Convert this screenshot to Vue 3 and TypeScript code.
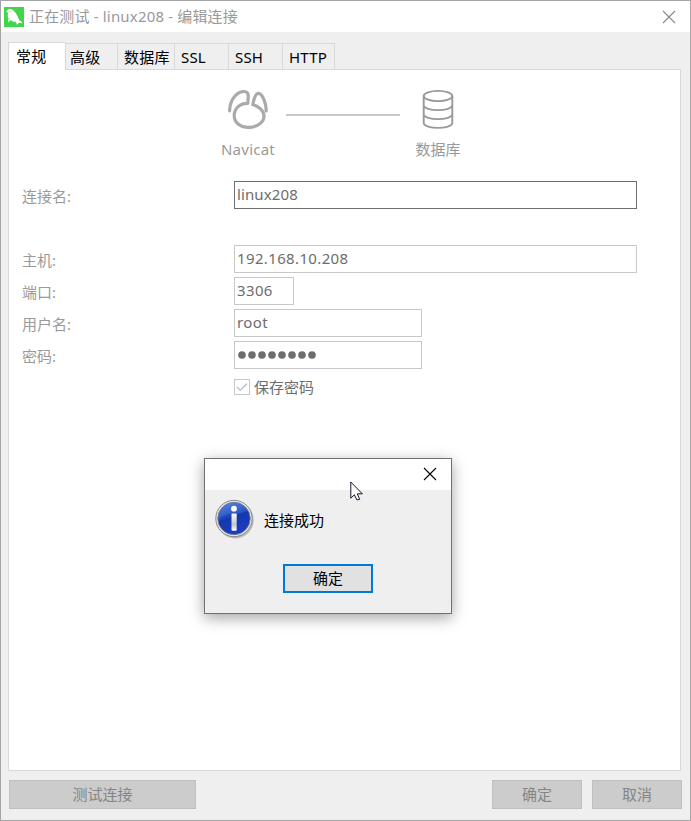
<script setup lang="ts">
interface Tab {
  label: string
  width: number
}

interface Field {
  id: string
  label: string
  value: string
  size: 'full' | 'small' | 'medium'
  type?: string
}

const tabs: Tab[] = [
  { label: '常规', width: 58 },
  { label: '高级', width: 52 },
  { label: '数据库', width: 57 },
  { label: 'SSL', width: 54 },
  { label: 'SSH', width: 54 },
  { label: 'HTTP', width: 52 },
]

const fields: Field[] = [
  { id: 'name', label: '连接名:', value: 'linux208', size: 'full' },
  { id: 'host', label: '主机:', value: '192.168.10.208', size: 'full' },
  { id: 'port', label: '端口:', value: '3306', size: 'small' },
  { id: 'user', label: '用户名:', value: 'root', size: 'medium' },
  { id: 'password', label: '密码:', value: '', size: 'medium', type: 'password' },
]
</script>

<template>
  <div class="window">
    <header class="titlebar">
      <svg class="logo" width="20" height="20" viewBox="0 0 20 20">
        <rect width="20" height="20" fill="#40d54a" />
        <path d="M3 3.2 C4.5 2.2 6 1.7 7.2 2.2 C9.5 3 11.6 5.2 13.2 8.5 C14.2 10.5 14.8 12 15.3 13.2 C16.8 13.8 18 15 18.5 16.3 L14.8 15.7 L12.8 18 L12.2 15.2 C10 15.2 8.2 14.4 6.7 13 L4 15.4 L4.5 11.4 C3.2 9.4 3.8 7.5 4.1 6 L2.3 4.8 Z" fill="#fff" />
        <path d="M5 5.4 L7 4.4 M5 12 L6.5 10.6 M10.5 15 L12 14.2" stroke="#8fe795" stroke-width=".8" />
      </svg>
      <span class="title">正在测试 - linux208 - 编辑连接</span>
      <svg class="close" width="14" height="14" viewBox="0 0 14 14">
        <path d="M1 1 L13 13 M13 1 L1 13" stroke="#888" stroke-width="1.1" />
      </svg>
    </header>

    <nav class="tabs">
      <div
        v-for="(tab, i) in tabs"
        :key="tab.label"
        class="tab"
        :class="{ active: i === 0, tight: i === 1 }"
        :style="{ width: tab.width + 'px' }"
      >{{ tab.label }}</div>
    </nav>

    <main class="panel">
      <div class="diagram">
        <div class="node latin">
          <svg width="42" height="42" viewBox="0 0 42 42" fill="none" stroke="#aaa" stroke-width="3.2" stroke-linecap="round" stroke-linejoin="round">
            <path d="M2.6 22.8 C2.8 14 8 4.5 15.8 3.6 C20.5 3 21.6 6 21.2 9.5 L20.8 15.3 C12.5 15 7.2 21 7.2 27.5 C7.2 34.5 12.8 39.4 21.5 39.4 C30.5 39.4 37 34 37 28.3 C37 23 31.5 18 25.8 16.6 C26.6 12.5 28.2 6.2 30.7 5.4 C34.8 4.6 39.4 14.5 39.2 23" />
          </svg>
          <span>Navicat</span>
        </div>
        <div class="wire"></div>
        <div class="node">
          <svg width="42" height="42" viewBox="0 0 42 42" fill="none" stroke="#999" stroke-width="1.9">
            <ellipse cx="21" cy="8" rx="14.3" ry="5.1" />
            <path d="M6.7 8 V34.8 C6.7 41.6 35.3 41.6 35.3 34.8 V8 M6.7 17 C6.7 23.8 35.3 23.8 35.3 17 M6.7 26 C6.7 32.8 35.3 32.8 35.3 26" />
          </svg>
          <span>数据库</span>
        </div>
      </div>

      <form class="form" @submit.prevent>
        <div v-for="field in fields" :key="field.id" class="row" :class="'row-' + field.id">
          <label class="label">{{ field.label }}</label>
          <div class="input" :class="field.size">
            <svg v-if="field.type === 'password'" class="dots" width="80" height="10" viewBox="0 0 80 10">
              <circle v-for="n in 8" :key="n" :cx="n * 10 - 5" cy="5" r="3.8" fill="#6d6d6d" />
            </svg>
            <template v-else>{{ field.value }}</template>
          </div>
        </div>
        <div class="save">
          <span class="checkbox">
            <svg width="14" height="14" viewBox="0 0 14 14">
              <path d="M2 7 L5.3 10.2 L12 3.6" fill="none" stroke="#c4c4c4" stroke-width="1.5" />
            </svg>
          </span>
          <span>保存密码</span>
        </div>
      </form>
    </main>

    <footer class="footer">
      <button class="btn test">测试连接</button>
      <button class="btn">确定</button>
      <button class="btn">取消</button>
    </footer>

    <section class="dialog">
      <div class="dialog-bar">
        <svg width="14" height="14" viewBox="0 0 14 14">
          <path d="M1 1 L13 13 M13 1 L1 13" stroke="#000" stroke-width="1.1" />
        </svg>
      </div>
      <div class="message">
        <svg width="40" height="41" viewBox="0 0 40 41">
          <defs>
            <linearGradient id="blue" x1="0" y1="0" x2=".35" y2="1">
              <stop offset="0" stop-color="#5e8ae2" />
              <stop offset=".48" stop-color="#2b58c8" />
              <stop offset=".55" stop-color="#1639a8" />
              <stop offset="1" stop-color="#2340d0" />
            </linearGradient>
            <linearGradient id="silver" x1="0" y1="0" x2="0" y2="1">
              <stop offset="0" stop-color="#fff" />
              <stop offset=".65" stop-color="#c2c5cd" />
              <stop offset="1" stop-color="#fff" />
            </linearGradient>
          </defs>
          <circle cx="20.3" cy="21" r="18.4" fill="#777" opacity=".45" />
          <circle cx="19" cy="19.5" r="18.2" fill="#e7e7e7" stroke="#888" stroke-width="1" />
          <circle cx="19" cy="19.5" r="16.2" fill="url(#blue)" stroke="#727b91" stroke-width="1" />
          <path d="M3.5 21 C9 13 23 13.5 34.5 17 C35 28 29 34.5 19 35 C10 35 4 29 3.5 21" fill="#1437b0" opacity=".45" />
          <circle cx="19" cy="9.7" r="2.9" fill="#fff" />
          <rect x="16.5" y="14.4" width="5.2" height="17.3" rx="1" fill="url(#silver)" />
        </svg>
        <span>连接成功</span>
      </div>
      <button class="ok">确定</button>
    </section>

    <svg class="cursor" width="14" height="21" viewBox="0 0 14 21">
      <path d="M.8 1 V17.2 L4.3 13.8 L7 19 L9.7 18.3 L7.3 12.8 H12.3 Z" fill="#fff" stroke="#15152a" stroke-width="1" />
    </svg>
  </div>
</template>

<style>
body {
  margin: 0;
  overflow: hidden;
}
</style>

<style scoped>
.window,
.window * {
  box-sizing: border-box;
}
.window {
  position: relative;
  width: 691px;
  height: 821px;
  border: 1px solid #a5a5a5;
  background: #efefef;
  font: 15px/20px "Noto Sans", "Noto Sans CJK SC", sans-serif;
  color: #000;
  display: flex;
  flex-direction: column;
}
svg {
  display: block;
  flex: none;
}
.titlebar {
  height: 31px;
  flex: none;
  background: #fff;
  display: flex;
  align-items: center;
  padding: 0 14px 0 3px;
  color: #999;
}
.title {
  margin-left: 5px;
  padding-bottom: 2px;
  flex: 1;
  letter-spacing: 0.17px;
  white-space: nowrap;
}
.tabs {
  display: flex;
  align-items: flex-end;
  height: 37px;
  flex: none;
  padding-left: 7px;
}
.tab {
  height: 26px;
  padding: 3px 0 0 6px;
  border: 1px solid #d9d9d9;
  border-left: 0;
  border-bottom: 0;
  letter-spacing: 0.2px;
  white-space: nowrap;
}
.tab.tight {
  padding-left: 4px;
}
.tab.active {
  position: relative;
  z-index: 1;
  height: 28px;
  margin-bottom: -1px;
  padding-left: 7px;
  border-left: 1px solid #d9d9d9;
  background: #fff;
}
.panel {
  width: 673px;
  height: 702px;
  flex: none;
  margin-left: 7px;
  border: 1px solid #d9d9d9;
  background: #fff;
}
.diagram {
  display: flex;
  padding: 18px 0 0 204px;
  color: #999;
}
.node {
  width: 70px;
  display: flex;
  flex-direction: column;
  align-items: center;
}
.node span {
  margin-top: 9px;
}
.latin {
  letter-spacing: 0.25px;
}
.wire {
  width: 114px;
  height: 2px;
  margin: 26px 3px 0;
  background: #c9c9c9;
}
.form {
  padding: 22px 0 0 13px;
}
.row {
  display: flex;
  height: 28px;
  margin-bottom: 4px;
}
.row-name {
  margin-bottom: 36px;
}
.label {
  width: 212px;
  padding-top: 5px;
  color: #9a9a9a;
}
.input {
  height: 28px;
  padding: 2px;
  border: 1px solid #c8c8c8;
  color: #6d6d6d;
  letter-spacing: 0.36px;
}
.row-name .input {
  border-color: #6f6f6f;
  letter-spacing: 0.12px;
}
.full {
  width: 403px;
}
.small {
  width: 60px;
}
.medium {
  width: 188px;
}
.dots {
  margin-top: 6px;
}
.save {
  display: flex;
  align-items: center;
  gap: 4px;
  height: 20px;
  margin: 8px 0 0 212px;
  color: #6d6d6d;
}
.checkbox {
  width: 16px;
  height: 16px;
  border: 1px solid #c8c8c8;
}
.footer {
  display: flex;
  gap: 10px;
  padding: 9px 8px 0;
}
.btn {
  width: 90px;
  height: 29px;
  padding: 0 0 1px;
  border: 1px solid #bfbfbf;
  background: #ccc;
  color: #858585;
  font: inherit;
}
.btn.test {
  width: 187px;
  margin-right: auto;
}
.dialog {
  position: absolute;
  left: 203px;
  top: 457px;
  width: 248px;
  height: 156px;
  border: 1px solid #707070;
  background: #efefef;
  box-shadow: 0 4px 14px rgba(0, 0, 0, 0.36);
}
.dialog-bar {
  height: 31px;
  padding: 8px 14px 0 0;
  display: flex;
  justify-content: flex-end;
  background: #fff;
}
.message {
  display: flex;
  align-items: center;
  gap: 9px;
  padding: 9px 0 0 10px;
}
.ok {
  display: block;
  width: 90px;
  height: 29px;
  margin: 24px 0 0 78px;
  padding: 0 0 2px;
  border: 2px solid #0078d7;
  background: #e1e1e1;
  color: #000;
  font: inherit;
}
.cursor {
  position: absolute;
  left: 349px;
  top: 480px;
}
</style>
